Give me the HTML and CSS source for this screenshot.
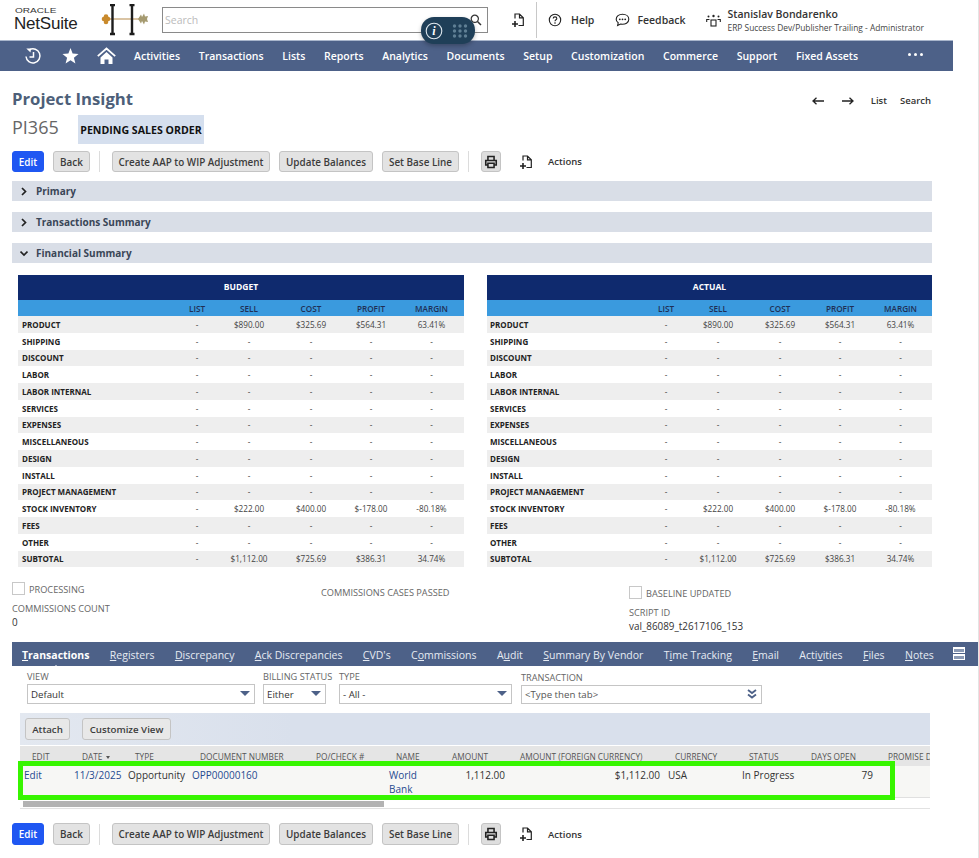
FILE: index.html
```html
<!DOCTYPE html>
<html lang="en">
<head>
<meta charset="utf-8">
<title>Project Insight - NetSuite</title>
<link rel="stylesheet" href="styles.css">
</head>
<body>
<svg class="sprites" width="0" height="0" aria-hidden="true">
  <symbol id="i-action" viewBox="0 0 12 14"><path d="M3 5.500V1H7.500L11.300 4.800V12.500H6.500M7.500 1V4.800H11.300" fill="none" stroke="currentColor" stroke-width="1.200"/><path d="M3 8V14M0 11H6" fill="none" stroke="currentColor" stroke-width="1.600"/></symbol>
  <symbol id="i-print" viewBox="0 0 16 16"><path d="M4.500 6V1.800H11.500V6M4.500 11.500H2V6.200H14V11.500H11.500M4.500 9.500H11.500V14.300H4.500Z" fill="none" stroke="currentColor" stroke-width="1.800"/></symbol>
</svg>

<header class="topbar">
  <div class="logo"><span class="logo-oracle">ORACLE</span><span class="logo-suite">NetSuite</span></div>
  <svg class="brand" width="50" height="32" viewBox="0 0 50 32" aria-hidden="true">
    <path d="M5 15H41" stroke="#b58a4a" stroke-width="1.200"/>
    <circle cx="6" cy="12.500" r="2.300" fill="#c98a2c"/><circle cx="6" cy="18" r="2.300" fill="#c98a2c"/><circle cx="4" cy="15" r="2.300" fill="#c98a2c"/><circle cx="8" cy="15" r="2.300" fill="#c98a2c"/>
    <path d="M10 1H15M12.500 1V30M10 30H15M29.500 1H34.500M32 1V30M29.500 30H34.500" stroke="#1d1d1d" stroke-width="2.400"/>
    <path d="M38 15L41 10.500L42 13L44 9.500L45 12.500L48 12L47 15L48 18L45 17.500L44 20.500L42 17L41 19.500Z" fill="#a59a70"/>
  </svg>
  <div class="searchbox"><span class="search-ph">Search</span>
    <svg class="search-ic" width="12" height="12" viewBox="0 0 12 12" aria-hidden="true"><circle cx="4.800" cy="4.800" r="3.600" fill="none" stroke="#333" stroke-width="1.200"/><path d="M7.500 7.500L11 11" stroke="#333" stroke-width="1.500"/></svg>
  </div>
  <svg class="ic-add" width="12" height="14"><use href="#i-action"/></svg>
  <div class="top-sep"></div>
  <svg class="ic-help" width="14" height="14" viewBox="0 0 14 14" aria-hidden="true"><circle cx="7" cy="7" r="5.700" fill="none" stroke="#222" stroke-width="1.100"/><path d="M5.200 5.500C5.200 3.300 8.800 3.300 8.800 5.500C8.800 6.800 7 6.800 7 8.300" fill="none" stroke="#222" stroke-width="1.100"/><circle cx="7" cy="10" r=".8" fill="#222"/></svg>
  <span class="top-link top-help">Help</span>
  <svg class="ic-feed" width="15" height="14" viewBox="0 0 15 14" aria-hidden="true"><path d="M7.500 1.200C3.800 1.200 1.200 3.400 1.200 6.200C1.200 7.700 2 8.900 3.200 9.800L2.600 12.600L5.600 11.100C10.500 11.900 13.800 9.500 13.800 6.200C13.800 3.400 11.200 1.200 7.500 1.200Z" fill="none" stroke="#222" stroke-width="1.100"/><circle cx="4.800" cy="6.300" r=".9" fill="#222"/><circle cx="7.500" cy="6.300" r=".9" fill="#222"/><circle cx="10.200" cy="6.300" r=".9" fill="#222"/></svg>
  <span class="top-link top-feed">Feedback</span>
  <svg class="ic-role" width="15" height="14" viewBox="0 0 15 14" aria-hidden="true"><rect x="5" y="7" width="5" height="6" fill="none" stroke="#222" stroke-width="1.100"/><circle cx="7.500" cy="3" r="1.200" fill="#222"/><circle cx="2.500" cy="3.500" r="1" fill="#222"/><circle cx="12.500" cy="3.500" r="1" fill="#222"/><path d="M.7 9V6.500H3.500M14.300 9V6.500H11.500" fill="none" stroke="#222" stroke-width="1.100"/></svg>
  <div class="user"><div class="user-name">Stanislav Bondarenko</div><div class="user-role">ERP Success Dev/Publisher Trailing - Administrator</div></div>
</header>

<div class="pill" aria-hidden="true">
  <svg width="18" height="18" viewBox="0 0 18 18"><circle cx="9" cy="9" r="7.800" fill="none" stroke="#dfe8ee" stroke-width="1.100"/><text x="9" y="13" class="pill-i">i</text></svg>
  <svg width="16" height="14" viewBox="0 0 16 14" fill="#5f7f94"><circle cx="2.500" cy="2" r="1.700"/><circle cx="8" cy="2" r="1.700"/><circle cx="13.500" cy="2" r="1.700"/><circle cx="2.500" cy="7" r="1.700"/><circle cx="8" cy="7" r="1.700"/><circle cx="13.500" cy="7" r="1.700"/><circle cx="2.500" cy="12" r="1.700"/><circle cx="8" cy="12" r="1.700"/><circle cx="13.500" cy="12" r="1.700"/></svg>
</div>

<nav class="nav">
  <svg class="nav-ic nav-hist" width="18" height="18" viewBox="0 0 18 18" aria-hidden="true"><path d="M5.500 2.800A7 7 0 1 1 2 9.500M9.500 5V10H5.500" fill="none" stroke="#fff" stroke-width="1.500"/><path d="M2.300 1.500H7L6.500 5.500Z" fill="#fff"/></svg>
  <svg class="nav-ic nav-star" width="17" height="16" viewBox="0 0 17 16" aria-hidden="true"><path d="M8.500 0L10.600 5.600L16.500 5.900L11.900 9.700L13.400 15.600L8.500 12.300L3.600 15.600L5.100 9.700L.5 5.900L6.400 5.600Z" fill="#fff"/></svg>
  <svg class="nav-ic nav-home" width="19" height="18" viewBox="0 0 19 18" aria-hidden="true"><path d="M.8 9.200L9.500 1.500L18.200 9.200" fill="none" stroke="#fff" stroke-width="1.800"/><path d="M3.500 10.500L9.500 5L15.500 10.500V17H11.500V12.500H7.500V17H3.500Z" fill="#fff"/></svg>
  <a class="nav-item">Activities</a><a class="nav-item">Transactions</a><a class="nav-item">Lists</a><a class="nav-item">Reports</a><a class="nav-item">Analytics</a><a class="nav-item">Documents</a><a class="nav-item">Setup</a><a class="nav-item">Customization</a><a class="nav-item">Commerce</a><a class="nav-item">Support</a><a class="nav-item">Fixed Assets</a>
  <span class="nav-more"><i></i><i></i><i></i></span>
</nav>

<main class="page">
  <div class="title-row">
    <h1 class="title">Project Insight</h1>
    <div class="pager">
      <svg width="12" height="8" viewBox="0 0 12 8" aria-hidden="true"><path d="M12 4H2M4.500 .8L1 4L4.500 7.200" fill="none" stroke="#222" stroke-width="1.300"/></svg>
      <svg class="pager-next" width="12" height="8" viewBox="0 0 12 8" aria-hidden="true"><path d="M0 4H10M7.500 .8L11 4L7.500 7.200" fill="none" stroke="#222" stroke-width="1.300"/></svg>
      <a class="pager-list">List</a><a class="pager-search">Search</a>
    </div>
  </div>
  <div class="id-row"><span class="rec-id">PI365</span><span class="badge">PENDING SALES ORDER</span></div>

  <div class="actions">
    <button class="btn btn-primary">Edit</button><button class="btn btn-back">Back</button><span class="sep"></span>
    <button class="btn btn-aap">Create AAP to WIP Adjustment</button><button class="btn btn-upd">Update Balances</button><button class="btn btn-base">Set Base Line</button><span class="sep sep2"></span>
    <button class="btn btn-print"><svg width="14" height="14"><use href="#i-print"/></svg></button>
    <svg class="ic-actions" width="12" height="14"><use href="#i-action"/></svg><span class="actions-label">Actions</span>
  </div>

  <div class="section"><svg class="chev" width="8" height="9" viewBox="0 0 8 9" aria-hidden="true"><path d="M2 1L5.500 4.500L2 8" fill="none" stroke="#222" stroke-width="1.700"/></svg>Primary</div>
  <div class="section"><svg class="chev" width="8" height="9" viewBox="0 0 8 9" aria-hidden="true"><path d="M2 1L5.500 4.500L2 8" fill="none" stroke="#222" stroke-width="1.700"/></svg>Transactions Summary</div>
  <div class="section"><svg class="chev" width="8" height="9" viewBox="0 0 8 9" aria-hidden="true"><path d="M.5 2.500L4 6L7.500 2.500" fill="none" stroke="#222" stroke-width="1.700"/></svg>Financial Summary</div>

  <div class="fin">
    <div class="fin-table">
      <div class="fin-title">BUDGET</div>
      <div class="fin-row fin-head"><b></b><span>LIST</span><span>SELL</span><span>COST</span><span>PROFIT</span><span>MARGIN</span></div>
      <div class="fin-row"><b>PRODUCT</b><span>-</span><span>$890.00</span><span>$325.69</span><span>$564.31</span><span>63.41%</span></div>
      <div class="fin-row"><b>SHIPPING</b><span>-</span><span>-</span><span>-</span><span>-</span><span>-</span></div>
      <div class="fin-row"><b>DISCOUNT</b><span>-</span><span>-</span><span>-</span><span>-</span><span>-</span></div>
      <div class="fin-row"><b>LABOR</b><span>-</span><span>-</span><span>-</span><span>-</span><span>-</span></div>
      <div class="fin-row"><b>LABOR INTERNAL</b><span>-</span><span>-</span><span>-</span><span>-</span><span>-</span></div>
      <div class="fin-row"><b>SERVICES</b><span>-</span><span>-</span><span>-</span><span>-</span><span>-</span></div>
      <div class="fin-row"><b>EXPENSES</b><span>-</span><span>-</span><span>-</span><span>-</span><span>-</span></div>
      <div class="fin-row"><b>MISCELLANEOUS</b><span>-</span><span>-</span><span>-</span><span>-</span><span>-</span></div>
      <div class="fin-row"><b>DESIGN</b><span>-</span><span>-</span><span>-</span><span>-</span><span>-</span></div>
      <div class="fin-row"><b>INSTALL</b><span>-</span><span>-</span><span>-</span><span>-</span><span>-</span></div>
      <div class="fin-row"><b>PROJECT MANAGEMENT</b><span>-</span><span>-</span><span>-</span><span>-</span><span>-</span></div>
      <div class="fin-row"><b>STOCK INVENTORY</b><span>-</span><span>$222.00</span><span>$400.00</span><span>$-178.00</span><span>-80.18%</span></div>
      <div class="fin-row"><b>FEES</b><span>-</span><span>-</span><span>-</span><span>-</span><span>-</span></div>
      <div class="fin-row"><b>OTHER</b><span>-</span><span>-</span><span>-</span><span>-</span><span>-</span></div>
      <div class="fin-row"><b>SUBTOTAL</b><span>-</span><span>$1,112.00</span><span>$725.69</span><span>$386.31</span><span>34.74%</span></div>
    </div>
    <div class="fin-table fin-actual">
      <div class="fin-title">ACTUAL</div>
      <div class="fin-row fin-head"><b></b><span>LIST</span><span>SELL</span><span>COST</span><span>PROFIT</span><span>MARGIN</span></div>
      <div class="fin-row"><b>PRODUCT</b><span>-</span><span>$890.00</span><span>$325.69</span><span>$564.31</span><span>63.41%</span></div>
      <div class="fin-row"><b>SHIPPING</b><span>-</span><span>-</span><span>-</span><span>-</span><span>-</span></div>
      <div class="fin-row"><b>DISCOUNT</b><span>-</span><span>-</span><span>-</span><span>-</span><span>-</span></div>
      <div class="fin-row"><b>LABOR</b><span>-</span><span>-</span><span>-</span><span>-</span><span>-</span></div>
      <div class="fin-row"><b>LABOR INTERNAL</b><span>-</span><span>-</span><span>-</span><span>-</span><span>-</span></div>
      <div class="fin-row"><b>SERVICES</b><span>-</span><span>-</span><span>-</span><span>-</span><span>-</span></div>
      <div class="fin-row"><b>EXPENSES</b><span>-</span><span>-</span><span>-</span><span>-</span><span>-</span></div>
      <div class="fin-row"><b>MISCELLANEOUS</b><span>-</span><span>-</span><span>-</span><span>-</span><span>-</span></div>
      <div class="fin-row"><b>DESIGN</b><span>-</span><span>-</span><span>-</span><span>-</span><span>-</span></div>
      <div class="fin-row"><b>INSTALL</b><span>-</span><span>-</span><span>-</span><span>-</span><span>-</span></div>
      <div class="fin-row"><b>PROJECT MANAGEMENT</b><span>-</span><span>-</span><span>-</span><span>-</span><span>-</span></div>
      <div class="fin-row"><b>STOCK INVENTORY</b><span>-</span><span>$222.00</span><span>$400.00</span><span>$-178.00</span><span>-80.18%</span></div>
      <div class="fin-row"><b>FEES</b><span>-</span><span>-</span><span>-</span><span>-</span><span>-</span></div>
      <div class="fin-row"><b>OTHER</b><span>-</span><span>-</span><span>-</span><span>-</span><span>-</span></div>
      <div class="fin-row"><b>SUBTOTAL</b><span>-</span><span>$1,112.00</span><span>$725.69</span><span>$386.31</span><span>34.74%</span></div>
    </div>
  </div>

  <div class="fields">
    <div class="col col-a">
      <div class="check-line"><span class="checkbox"></span><span class="lbl">PROCESSING</span></div>
      <div class="lbl lbl-count">COMMISSIONS COUNT</div>
      <div class="val">0</div>
    </div>
    <div class="col col-b"><div class="lbl">COMMISSIONS CASES PASSED</div></div>
    <div class="col col-c">
      <div class="check-line"><span class="checkbox"></span><span class="lbl">BASELINE UPDATED</span></div>
      <div class="lbl lbl-count">SCRIPT ID</div>
      <div class="val">val_86089_t2617106_153</div>
    </div>
  </div>

  <div class="tabs">
    <a class="tab tab-on"><u>T</u>ransactions</a><a class="tab"><u>R</u>egisters</a><a class="tab"><u>D</u>iscrepancy</a><a class="tab"><u>A</u>ck Discrepancies</a><a class="tab"><u>C</u>VD's</a><a class="tab">C<u>o</u>mmissions</a><a class="tab">A<u>u</u>dit</a><a class="tab"><u>S</u>ummary By Vendor</a><a class="tab">T<u>i</u>me Tracking</a><a class="tab"><u>E</u>mail</a><a class="tab">Acti<u>v</u>ities</a><a class="tab"><u>F</u>iles</a><a class="tab"><u>N</u>otes</a>
    <span class="tab-menu"><i></i><i></i></span>
  </div>

  <div class="filters">
    <div class="filter f-view"><div class="lbl">VIEW</div><div class="select">Default<i class="caret"></i></div></div>
    <div class="filter f-bill"><div class="lbl">BILLING STATUS</div><div class="select">Either<i class="caret"></i></div></div>
    <div class="filter f-type"><div class="lbl">TYPE</div><div class="select">- All -<i class="caret"></i></div></div>
    <div class="filter f-trans"><div class="lbl">TRANSACTION</div><div class="select select-trans">&lt;Type then tab&gt;
      <svg class="dbl" width="10" height="10" viewBox="0 0 10 10" aria-hidden="true"><path d="M1 1L5 4L9 1M1 5.500L5 8.500L9 5.500" fill="none" stroke="#4d6188" stroke-width="1.800"/></svg></div></div>
  </div>

  <div class="grid-wrap">
    <div class="grid-tools"><button class="btn btn-attach">Attach</button><button class="btn btn-cust">Customize View</button></div>
    <div class="grid-head">
      <span>EDIT</span><span>DATE <i class="sort"></i></span><span>TYPE</span><span>DOCUMENT NUMBER</span><span>PO/CHECK #</span><span>NAME</span><span>AMOUNT</span><span>AMOUNT (FOREIGN CURRENCY)</span><span>CURRENCY</span><span>STATUS</span><span>DAYS OPEN</span><span>PROMISE DATE</span>
    </div>
    <div class="grid-row">
      <a>Edit</a><a>11/3/2025</a><span>Opportunity</span><a>OPP00000160</a><span></span><a>World Bank</a><span class="num">1,112.00</span><span class="num">$1,112.00</span><span>USA</span><span>In Progress</span><span class="num">79</span><span></span>
    </div>
    <div class="grid-scroll"><div class="thumb"></div></div>
    <div class="highlight"></div>
  </div>

  <div class="actions actions-bottom">
    <button class="btn btn-primary">Edit</button><button class="btn btn-back">Back</button><span class="sep"></span>
    <button class="btn btn-aap">Create AAP to WIP Adjustment</button><button class="btn btn-upd">Update Balances</button><button class="btn btn-base">Set Base Line</button><span class="sep sep2"></span>
    <button class="btn btn-print"><svg width="14" height="14"><use href="#i-print"/></svg></button>
    <svg class="ic-actions" width="12" height="14"><use href="#i-action"/></svg><span class="actions-label">Actions</span>
  </div>
</main>
</body>
</html>
```
FILE: styles.css
```css
* { box-sizing: border-box; }
html, body { margin: 0; height: 100%; overflow: hidden; }
body {
  font-family: "Open Sans", "Liberation Sans", sans-serif;
  font-size: 10.500px;
  color: #333;
  background: #fff;
  position: relative;
  border-right: 1px solid #e4e4e4;
}
.sprites { position: absolute; }

/* top bar */
.topbar { display: flex; align-items: center; height: 40px; padding-left: 14px; color: #222; }
.logo { display: flex; flex-direction: column; width: 89px; height: 32px; padding-top: 3px; }
.logo-oracle { font-family: "Liberation Sans", sans-serif; font-size: 7.500px; line-height: 8px; transform: scaleX(1.340); transform-origin: left; color: #333; margin-left: 1px; }
.logo-suite { font-family: "Liberation Sans", sans-serif; font-size: 17px; line-height: 18px; color: #222; letter-spacing: -.2px; }
.brand { margin: -1px 0 0 -3px; }
.searchbox { position: relative; width: 326px; height: 26px; margin: 0 0 0 12px; border: 1px solid #8a8a8a; padding: 0 2px 1px; display: flex; align-items: center; }
.search-ph { color: #bbb; font-size: 10.500px; }
.search-ic { position: absolute; left: 307px; top: 6px; }
.ic-add { margin: 0 0 0 24px; color: #222; }
.top-sep { width: 1px; height: 36px; background: #c8c8c8; margin: 0 0 0 12px; }
.ic-help { margin: 0 0 0 11px; }
.top-link { font-weight: 600; font-size: 10.500px; color: #333; }
.top-help { margin-left: 9px; }
.ic-feed { margin-left: 21px; }
.top-feed { margin-left: 7px; }
.ic-role { margin: 0 0 0 20px; }
.user { margin-left: 7px; padding-top: 1px; }
.user-name { font-weight: 600; font-size: 10.500px; line-height: 13px; color: #333; }
.user-role { font-size: 8.400px; line-height: 13px; color: #444; }

/* floating pill */
.pill { position: absolute; left: 421px; top: 17px; width: 54px; height: 27px; background: #1f3f58; border-radius: 13px; display: flex; align-items: center; gap: 9px; padding-left: 4px; box-shadow: 0 2px 4px rgba(0,0,0,.25); }
.pill-i { font-family: "Liberation Serif", serif; font-style: italic; font-weight: 700; font-size: 12px; fill: #fff; text-anchor: middle; }

/* main nav */
.nav { display: flex; align-items: center; width: 953px; height: 31px; background: #4d6188; border-top: 1px solid #a9b6cc; color: #fff; }
.nav-ic { flex: none; }
.nav-hist { margin-left: 24px; }
.nav-star { margin-left: 20px; }
.nav-home { margin-left: 18px; }
.nav-item { font-weight: 600; font-size: 10.500px; color: #fff; margin-right: 18.700px; white-space: nowrap; }
.nav-item:first-of-type { margin-left: 18px; }
.nav-more { display: flex; gap: 3px; margin-left: 31px; margin-top: -3px; }
.nav-more i { width: 3px; height: 3px; border-radius: 50%; background: #fff; }

/* page */
.page { padding: 0 0 0 12px; width: 978px; }
.title-row { display: flex; justify-content: space-between; align-items: center; width: 919px; height: 20px; margin-top: 18px; }
.title { margin: 0; font-size: 16.700px; font-weight: 700; color: #4d5f79; line-height: 20px; }
.pager { display: flex; align-items: center; font-weight: 600; font-size: 9.500px; color: #333; margin-top: 3px; }
.pager-next { margin-left: 18px; }
.pager-list { margin-left: 17px; }
.pager-search { margin-left: 13px; }
.id-row { display: flex; align-items: center; height: 29px; margin-top: 6px; }
.rec-id { width: 66px; font-size: 18px; line-height: 24px; margin-top: -5px; color: #666; }
.badge { display: flex; align-items: center; justify-content: center; width: 126px; height: 29px; background: #d5dfee; font-weight: 700; font-size: 10.600px; color: #111; }

.actions { display: flex; align-items: center; height: 21px; margin-top: 7px; }
.btn { height: 21px; padding: 0; border: 1px solid #c4c4c4; border-radius: 3px; background: #e3e3e3; font-family: inherit; font-weight: 600; font-size: 9.900px; color: #3c3c3c; display: flex; align-items: center; justify-content: center; white-space: nowrap; }
.btn-primary { width: 32px; background: #1f57f2; border-color: #1f57f2; color: #fff; }
.btn-back { width: 37px; margin-left: 9px; }
.sep { width: 1px; height: 21px; background: #dcdcdc; margin-left: 9px; }
.btn-aap { width: 158px; margin-left: 12px; }
.btn-upd { width: 94px; margin-left: 9px; }
.btn-base { width: 77px; margin-left: 9px; }
.sep2 { margin-left: 9px; }
.btn-print { width: 20px; margin-left: 12px; color: #222; background: #dedede; }
.ic-actions { margin-left: 19px; color: #222; }
.actions-label { margin-left: 16px; font-weight: 600; font-size: 9.500px; color: #333; }

.section { display: flex; align-items: center; width: 920px; height: 20px; margin-top: 11px; background: #d9dee7; font-weight: 700; font-size: 10px; color: #3a4657; padding-left: 8px; }
.actions + .section { margin-top: 9px; }
.chev { margin-right: 8px; }

/* financial tables */
.fin { display: flex; gap: 23px; margin: 12px 0 0 6px; width: 914px; }
.fin-table { width: 446px; }
.fin-actual { width: 445px; }
.fin-actual .fin-row b { padding-left: 3px; }
.fin-title { height: 25px; padding-bottom: 2px; background: #0f2a6e; color: #fff; font-weight: 700; font-size: 8.500px; display: flex; align-items: center; justify-content: center; }
.fin-row { display: grid; grid-template-columns: 157px 44px 60px 64px 56px 65px; align-items: center; height: 16.750px; font-size: 8.200px; color: #444; }
.fin-row:nth-child(odd) { background: #eeeeee; }
.fin-row b { padding-left: 4px; font-size: 8px; font-weight: 700; color: #222; white-space: nowrap; }
.fin-row span { text-align: center; }
.fin-row.fin-head { height: 16px; background: #3a9ade; font-weight: 600; color: #1f2f55; }

/* fields */
.fields { display: grid; grid-template-columns: 309px 308px 1fr; height: 74.750px; }
.lbl { font-size: 9.200px; color: #666; white-space: nowrap; line-height: 12px; }
.val { font-size: 9.900px; color: #333; line-height: 14px; }
.check-line { display: flex; align-items: center; gap: 4px; }
.checkbox { width: 13px; height: 13px; border: 1px solid #c8c8c8; }
.col-a { padding-top: 13px; }
.col-a .lbl-count { margin-top: 7px; }
.col-a .check-line .lbl { margin-top: 4px; }
.col-b { padding-top: 20px; }
.col-c { padding-top: 17px; }
.col-c .lbl-count { margin-top: 7px; }
.col-c .check-line .lbl { margin-top: 4px; }

/* tabs */
.tabs { display: flex; align-items: center; position: relative; height: 24px; width: 966px; padding: 1px 0 0 10px; gap: 20.400px; background: #4d6188; color: #fff; font-size: 10.500px; }
.tab { white-space: nowrap; color: #e6ebf3; position: relative; }
.tab-on { font-weight: 700; color: #fff; }
.tab-on::after { content: ""; position: absolute; left: 30px; bottom: -7px; border: 4px solid transparent; border-top-width: 0; border-bottom-color: #fff; }
.tab-menu { position: absolute; right: 13px; top: 5px; width: 12px; display: flex; flex-direction: column; gap: 1px; }
.tab-menu i { height: 6px; border: 1.500px solid #fff; border-top-width: 2px; background: #8b9ab5; }

/* filters */
.filters { display: flex; align-items: flex-end; height: 38px; margin-left: 15px; }
.f-view { width: 236px; padding-right: 8px; }
.f-bill { width: 76px; padding-right: 13px; }
.f-type { width: 182px; padding-right: 9px; }
.f-trans { width: 241px; }
.select { position: relative; height: 20px; margin-top: 1px; padding-left: 3px; border: 1px solid #c5c5c5; display: flex; align-items: center; font-size: 9.700px; color: #333; }
.select-trans { height: 19px; color: #555; }
.caret { position: absolute; right: 4px; top: 6px; border: 5px solid transparent; border-bottom-width: 0; border-top: 5px solid #4d6188; }
.dbl { position: absolute; right: 4px; top: 3px; }

/* list grid */
.grid-wrap { position: relative; width: 910px; margin: 9px 0 0 8px; }
.grid-tools { display: flex; align-items: center; height: 32px; padding-left: 5px; background: linear-gradient(90deg, #e3e8f0, #d9e0ec 30%); }
.btn-attach { width: 45px; height: 22px; font-size: 9.700px; background: #e8e8e8; }
.btn-cust { width: 89px; height: 22px; margin-left: 12px; font-size: 9.700px; background: #e8e8e8; }
.grid-head { display: grid; grid-template-columns: 50px 53px 65px 116px 80px 56px 68px 155px 74px 62px 77px 60px; height: 20px; margin-top: 1px; padding-left: 12px; background: #e5e5e5; align-items: center; font-size: 8.300px; color: #555; white-space: nowrap; overflow: hidden; }
.sort { display: inline-block; margin-left: 1px; vertical-align: 1px; border: 2.500px solid transparent; border-bottom-width: 0; border-top: 3.500px solid #555; }
.grid-row { display: grid; grid-template-columns: 50px 54px 64px 112px 85px 50px 74px 155px 74px 72px 67px 53px; height: 32px; padding-top: 2px; background: #f7f7f5; border-bottom: 1px solid #e0e0e0; font-size: 10px; line-height: 14px; color: #333; align-items: start; }
.grid-row > * { padding: 0 4px; }
.grid-row a { color: #264a90; }
.grid-row .num { text-align: right; }
.grid-scroll { height: 11px; padding-top: 3px; padding-left: 3px; border-bottom: 1px solid #e2e2e2; }
.thumb { width: 361px; height: 6px; background: #b3b3b3; }
.highlight { position: absolute; left: -2px; top: 48px; width: 877px; height: 39px; border: 5px solid #37f500; pointer-events: none; }
.actions-bottom { margin-top: 14px; height: 22px; }
.actions-bottom .btn { height: 22px; }
```
